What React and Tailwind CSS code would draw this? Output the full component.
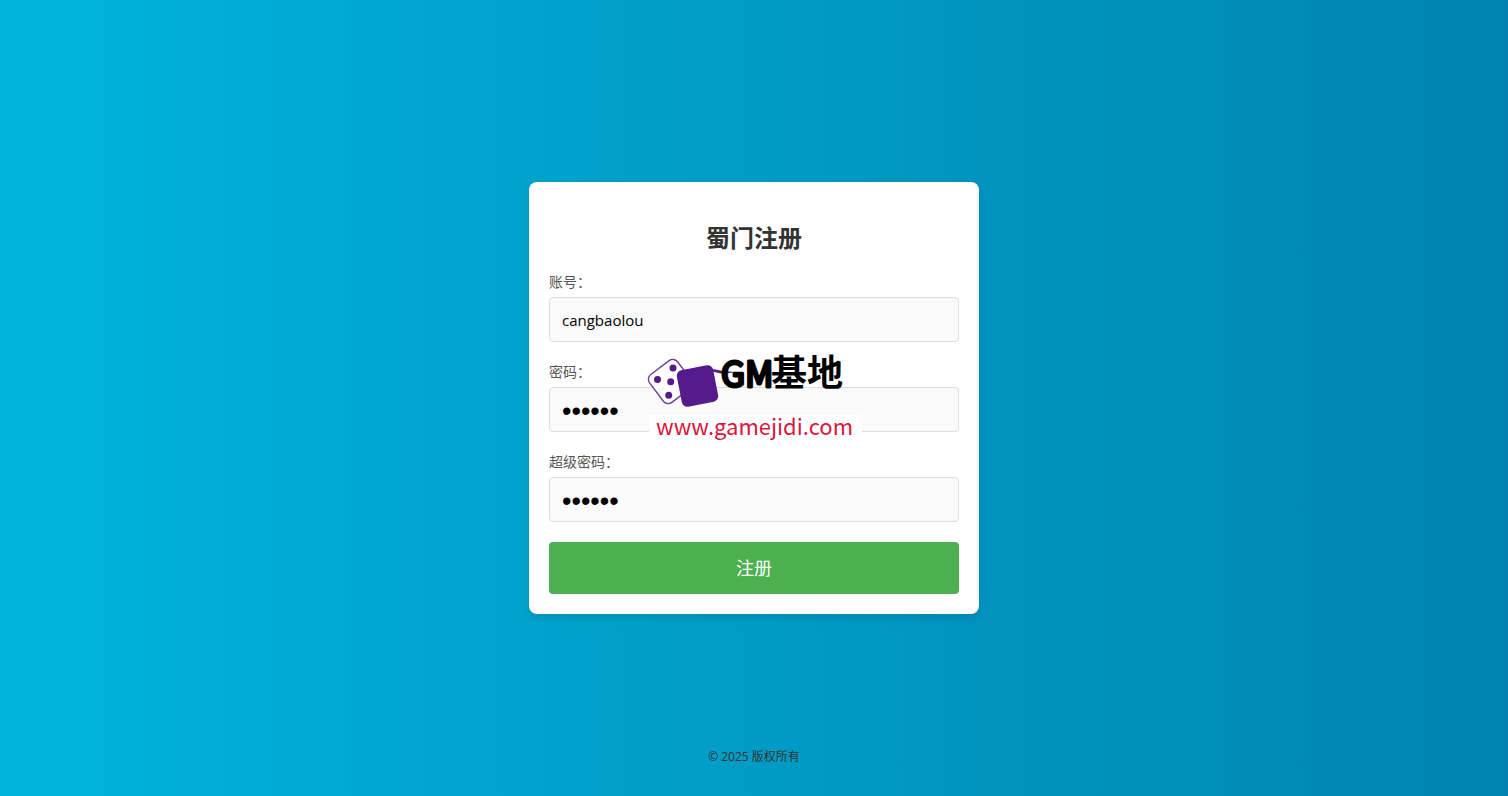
import React, { useState } from 'react';

const fields = [
  { name: 'account', label: '账号：', type: 'text', autoComplete: 'username' },
  { name: 'password', label: '密码：', type: 'password', autoComplete: 'new-password' },
  { name: 'superPassword', label: '超级密码：', type: 'password', autoComplete: 'new-password' },
];

const Logo = () => (
  <svg
    viewBox="0 0 212 96"
    className="absolute top-[170px] left-1/2 w-[212px] h-[96px] -translate-x-1/2 overflow-visible pointer-events-none"
    role="img"
    aria-label="GM基地"
  >
    <rect x="1" y="63" width="213" height="32" fill="#fff" />
    {/* dice */}
    <rect x="5" y="12" width="35" height="35" rx="6" fill="#fff" stroke="#551a8b" strokeWidth="1.4" strokeOpacity="0.85" transform="rotate(-37 22.5 29.5)" />
    <g fill="#551a8b">
      <circle cx="25" cy="16" r="3.5" />
      <circle cx="9.5" cy="27.5" r="3.5" />
      <circle cx="22.7" cy="29.7" r="3.5" />
      <circle cx="20.7" cy="43.2" r="3.5" />
      <path d="M62 16.5 L75 19 L88 20 L75 22 L62 19 Z" />
      <rect x="31" y="15.5" width="37" height="37" rx="5.5" transform="rotate(-11 49.5 34)" />
    </g>
    <g className="font-['Noto_Sans_CJK_SC',sans-serif]">
      <text x="73" y="35" fontSize="35" fontWeight="400" stroke="#000" strokeWidth="3" strokeLinejoin="round">GM</text>
      <text x="123" y="34" fontSize="36" fontWeight="700">基地</text>
      <text x="8" y="83" fontSize="22" fill="#dc143c">www.gamejidi.com</text>
    </g>
  </svg>
);

const App = () => {
  const [form, setForm] = useState({
    account: 'cangbaolou',
    password: '123456',
    superPassword: '123456',
  });

  const handleChange = (e) => {
    setForm({ ...form, [e.target.name]: e.target.value });
  };

  return (
    <div className="min-h-screen grid grid-rows-[1fr_auto_1fr] justify-items-center bg-linear-to-r/srgb from-[#00b4db] to-[#0083b0] font-['Open_Sans','Noto_Sans_CJK_SC',sans-serif]">
      <main className="relative row-start-2 w-full max-w-[450px] p-5 bg-white rounded-lg shadow-[0_4px_8px_rgba(0,0,0,0.1)]">
        <h1 className="pt-5 pb-[18px] text-2xl font-bold text-center text-[#333]">蜀门注册</h1>

        <form onSubmit={(e) => e.preventDefault()}>
          {fields.map((field) => (
            <div key={field.name} className="mb-5">
              <label htmlFor={field.name} className="block pb-[5px] text-sm text-[#555]">
                {field.label}
              </label>
              <input
                id={field.name}
                name={field.name}
                type={field.type}
                autoComplete={field.autoComplete}
                value={form[field.name]}
                onChange={handleChange}
                className={`block w-full h-[45px] px-3 text-black bg-[#fafafa] border border-[#ddd] rounded-sm ${
                  field.type === 'password' ? "pt-1 text-[27px] font-['Liberation_Sans',sans-serif]" : 'text-[15px]'
                }`}
              />
            </div>
          ))}
          <button type="submit" className="block w-full h-[52px] text-lg text-white bg-[#4caf50] rounded-sm hover:bg-[#45a049] cursor-pointer">
            注册
          </button>
        </form>

        <Logo />
      </main>

      <footer className="row-start-3 self-end pb-[31px] text-xs text-[#333]">© 2025 版权所有</footer>
    </div>
  );
};

export default App;
